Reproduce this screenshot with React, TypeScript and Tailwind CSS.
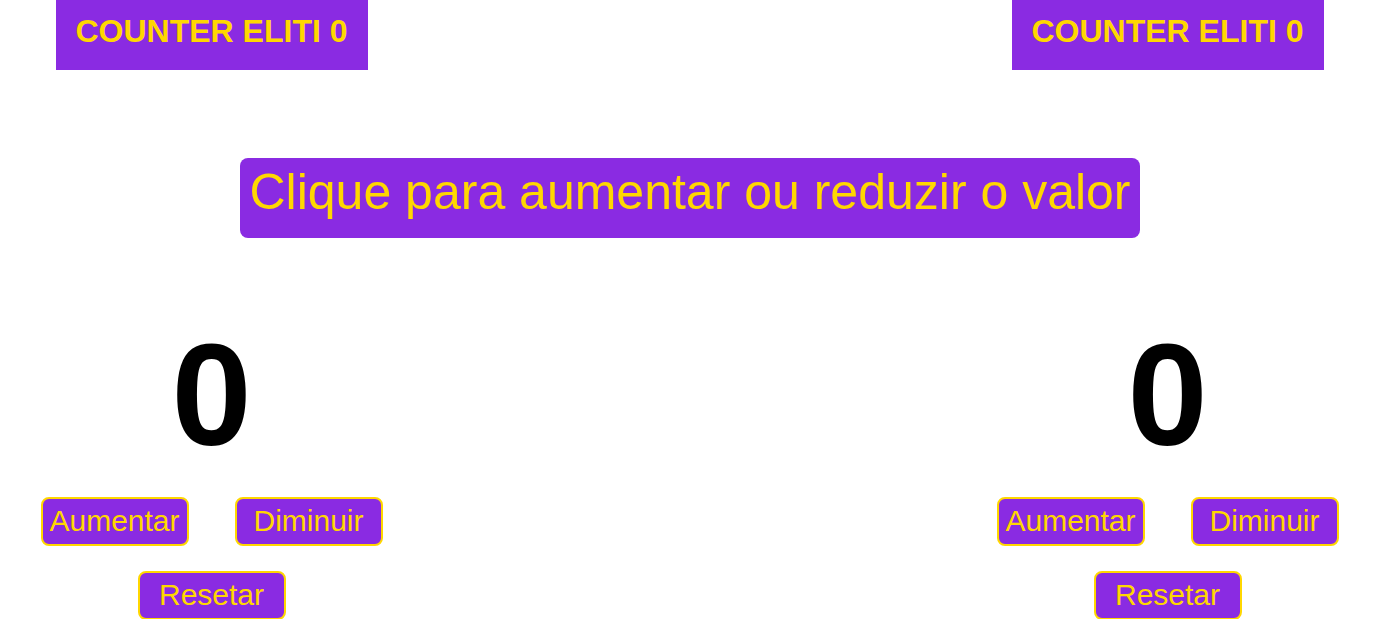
import { useState } from "react";

function Counter() {
    const [count, setCount] = useState(0);

    return (
        <div className="w-[343px] flex flex-col items-center">
            <h2 className="text-[144px] font-bold leading-[normal] text-black">
                {count}
            </h2>
            <div className="mt-[18px] flex gap-[46px]">
                <button
                    onClick={() => setCount(count + 1)}
                    className="w-[148px] h-[49px] pb-[2px] flex items-center justify-center rounded-[8px] border-2 border-[#ffd700] bg-[#8a2be2] text-[30px] leading-[normal] text-[#ffd700]"
                >
                    Aumentar
                </button>
                <button
                    onClick={() => setCount(count - 1)}
                    className="w-[148px] h-[49px] pb-[2px] flex items-center justify-center rounded-[8px] border-2 border-[#ffd700] bg-[#8a2be2] text-[30px] leading-[normal] text-[#ffd700]"
                >
                    Diminuir
                </button>
            </div>
            <button
                onClick={() => setCount(0)}
                className="mt-[25px] w-[148px] h-[49px] pb-[2px] flex items-center justify-center rounded-[8px] border-2 border-[#ffd700] bg-[#8a2be2] text-[30px] leading-[normal] text-[#ffd700]"
            >
                Resetar
            </button>
        </div>
    );
}

function Header() {
    return (
        <div className="w-[343px] flex justify-center">
            <h1 className="w-[312px] h-[70px] pt-[13px] bg-[#8a2be2] text-center text-[32px] font-bold leading-[normal] text-[#ffd700]">
                COUNTER ELITI 0
            </h1>
        </div>
    );
}

export default function App() {
    return (
        <div className="w-full h-[619px] overflow-hidden bg-white font-['Liberation_Sans',Arial,sans-serif]">
            <div className="flex justify-between pl-[40px] pr-[41px]">
                <Header />
                <Header />
            </div>

            <div className="mt-[88px] flex justify-center">
                <p className="w-[900px] h-[80px] pt-[5px] rounded-[8px] bg-[#8a2be2] text-center text-[50px] leading-[normal] text-[#ffd700]">
                    Clique para aumentar ou reduzir o valor
                </p>
            </div>

            <div className="mt-[75px] flex justify-between pl-[40px] pr-[41px]">
                <Counter />
                <Counter />
            </div>
        </div>
    );
}
